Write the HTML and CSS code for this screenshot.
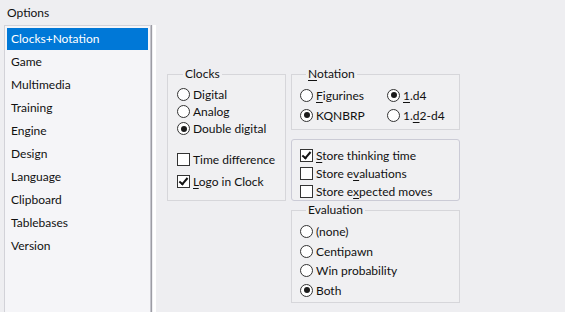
FILE: index.html
```html
<!DOCTYPE html>
<html lang="en">

<head>
    <meta charset="UTF-8">
    <title>Options</title>
    <link rel="stylesheet" href="styles.css">
</head>

<body>
    <div class="title">Options</div>

    <div class="dialog">
        <ul class="pages">
            <li class="page selected">Clocks+Notation</li>
            <li class="page">Game</li>
            <li class="page">Multimedia</li>
            <li class="page">Training</li>
            <li class="page">Engine</li>
            <li class="page">Design</li>
            <li class="page">Language</li>
            <li class="page">Clipboard</li>
            <li class="page">Tablebases</li>
            <li class="page">Version</li>
        </ul>
        <div class="splitter"></div>

        <div class="settings">
            <fieldset class="group clocks">
                <legend>Clocks</legend>
                <div class="opt"><span class="radio"></span>Digital</div>
                <div class="opt"><span class="radio"></span>Analog</div>
                <div class="opt"><span class="radio on"></span>Double digital</div>
                <div class="opt gap"><span class="check"></span>Time difference</div>
                <div class="opt logo"><span class="check on"></span><span><u>L</u>ogo in Clock</span></div>
            </fieldset>

            <div class="column">
                <fieldset class="group notation">
                    <legend><u>N</u>otation</legend>
                    <div class="opt"><span class="radio"></span><span><u>F</u>igurines</span></div>
                    <div class="opt"><span class="radio on"></span><span><u>1</u>.d4</span></div>
                    <div class="opt"><span class="radio on"></span>KQNBRP</div>
                    <div class="opt"><span class="radio"></span><span>1.<u>d</u>2-d4</span></div>
                </fieldset>

                <div class="group store">
                    <div class="opt"><span class="check on"></span><span><u>S</u>tore thinking time</span></div>
                    <div class="opt"><span class="check"></span><span>Store e<u>v</u>aluations</span></div>
                    <div class="opt"><span class="check"></span><span>Store e<u>x</u>pected moves</span></div>
                </div>

                <fieldset class="group evaluation">
                    <legend>Evaluation</legend>
                    <div class="opt"><span class="radio"></span>(none)</div>
                    <div class="opt"><span class="radio"></span>Centipawn</div>
                    <div class="opt"><span class="radio"></span>Win probability</div>
                    <div class="opt"><span class="radio on"></span>Both</div>
                </fieldset>
            </div>
        </div>
    </div>
</body>

</html>
```

FILE: styles.css
```css
html,
body {
    margin: 0;
    height: 100%;
    overflow: hidden;
}

body {
    background: #eeeef1;
    font-family: Lato, "Noto Sans", sans-serif;
    font-size: 12px;
    color: #111;
}

u {
    text-decoration-thickness: 1px;
    text-underline-offset: 2px;
}

.title {
    height: 25px;
    line-height: 25px;
    padding-left: 7px;
}

.dialog {
    display: flex;
    height: 300px;
    padding-left: 4px;
}

/* page list on the left */
.pages {
    list-style: none;
    margin: 0;
    padding: 2px;
    width: 141px;
    background: #f5f5f8;
    border-left: 1px solid #d2d2d8;
    border-top: 1px solid #d2d2d8;
    border-right: 1px solid #c4c4cc;
    box-shadow: 1px 0 0 #9c9ca4;
}

.page {
    height: 22px;
    line-height: 22px;
    margin-bottom: 1px;
    padding-left: 4px;
}

.page.selected {
    background: #0078d7;
    color: #fff;
}

.splitter {
    width: 3px;
    margin-left: 2px;
    background: #fff;
}

/* option groups */
.settings {
    display: flex;
    align-items: flex-start;
    gap: 5px;
    padding: 41px 0 0 11px;
}

.column {
    display: flex;
    flex-direction: column;
    width: 169px;
}

.group {
    margin: 0;
    min-width: 0;
    border: 1px solid #d6d6da;
    background: #f0f0f2;
    box-sizing: border-box;
}

.group legend {
    padding: 0 2px;
    margin-left: 6px;
    line-height: 16px;
}

.opt {
    display: flex;
    align-items: center;
    gap: 3px;
    white-space: nowrap;
}

.radio,
.check {
    flex: none;
    width: 13px;
    height: 13px;
    box-sizing: border-box;
    border: 1px solid #333;
    background: #fff;
    position: relative;
}

.radio {
    border-radius: 50%;
}

.radio.on::after {
    content: "";
    position: absolute;
    left: 2.5px;
    top: 2.5px;
    width: 6px;
    height: 6px;
    border-radius: 50%;
    background: #1b1b1b;
}

.check.on::after {
    content: "";
    position: absolute;
    left: 3px;
    top: 0;
    width: 3px;
    height: 7px;
    border: solid #111;
    border-width: 0 2px 2px 0;
    transform: rotate(40deg);
}

.clocks {
    width: 119px;
    height: 135px;
    padding: 4px 9px 0;
}

.clocks .opt {
    height: 17px;
}

.clocks .gap {
    margin-top: 14px;
}

.clocks .logo {
    margin-top: 5px;
}

.notation {
    height: 64px;
    display: grid;
    grid-template-columns: 87px auto;
    align-content: start;
    padding: 3px 8px 0;
}

.notation .opt {
    height: 20px;
}

.store {
    height: 62px;
    margin-top: 9px;
    border-color: #cbcbd6;
    border-radius: 3px;
    padding: 6px 8px 0;
}

.store .opt {
    height: 18px;
}

.evaluation {
    height: 101px;
    margin-top: 1px;
    padding: 4px 8px 0;
}

.evaluation .opt {
    height: 19.5px;
}
```
